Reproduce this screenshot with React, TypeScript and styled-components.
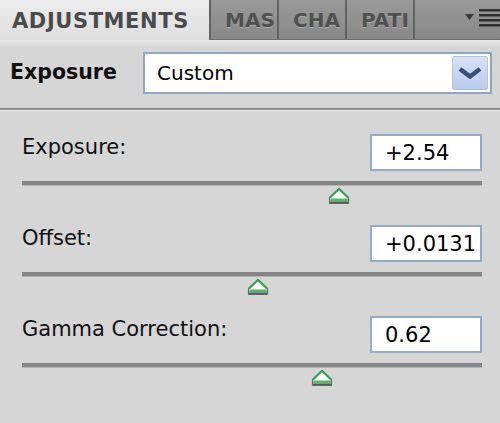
import styled, { createGlobalStyle } from 'styled-components';

type Setting = {
  label: string;
  value: string;
  thumb: number;
};

const settings: Setting[] = [
  { label: 'Exposure:', value: '+2.54', thumb: 317 },
  { label: 'Offset:', value: '+0.0131', thumb: 236 },
  { label: 'Gamma Correction:', value: '0.62', thumb: 300 },
];

// only the visible part of each narrow tab's name
const tabs = ['MAS', 'CHA', 'PATI'];

function Thumb() {
  return (
    <svg width="22" height="18" viewBox="0 0 22 18">
      <path d="M11 1.5 L20.5 10.5 V16.5 H1.5 V10.5 Z" fill="#ffffff" stroke="#6e6e6e" strokeWidth="1.2" />
      <path d="M2 10.5 L11 2 L20 10.5" fill="none" stroke="#33a24c" strokeWidth="2" strokeLinejoin="round" />
      <rect x="2.2" y="11.5" width="17.6" height="3" fill="#4dbb62" />
      <rect x="2" y="14.5" width="18" height="2" fill="#5a5a5a" />
    </svg>
  );
}

function App() {
  return (
    <>
      <GlobalStyle />
      <Panel>
        <TabBar>
          <ActiveTab>ADJUSTMENTS</ActiveTab>
          {tabs.map((t) => (
            <Tab key={t}>{t}</Tab>
          ))}
          <Tab $last />
          <MenuButton>
            <svg width="36" height="20" viewBox="0 0 36 20">
              <path d="M1 5 H10 L5.5 11 Z" fill="#3a3a3a" />
              <rect x="15" y="0" width="21" height="2.5" fill="#2e2e2e" />
              <rect x="15" y="5" width="21" height="2.5" fill="#2e2e2e" />
              <rect x="15" y="10" width="21" height="2.5" fill="#2e2e2e" />
              <rect x="15" y="15" width="21" height="2.5" fill="#2e2e2e" />
            </svg>
          </MenuButton>
        </TabBar>

        <Header>
          <PresetLabel>Exposure</PresetLabel>
          <Select>
            <SelectText>Custom</SelectText>
            <SelectButton>
              <svg width="24" height="12" viewBox="0 0 24 12">
                <path d="M2 2 L12 9.5 L22 2" fill="none" stroke="#3b4e76" strokeWidth="4.5" strokeLinejoin="miter" />
              </svg>
            </SelectButton>
          </Select>
        </Header>

        <Controls>
          {settings.map((s) => (
            <Row key={s.label}>
              <RowTop>
                <Label>{s.label}</Label>
                <ValueBox>{s.value}</ValueBox>
              </RowTop>
              <Track />
              <ThumbLane>
                <ThumbHolder style={{ left: s.thumb - 11 }}>
                  <Thumb />
                </ThumbHolder>
              </ThumbLane>
            </Row>
          ))}
        </Controls>
      </Panel>
    </>
  );
}

const GlobalStyle = createGlobalStyle`
  html, body {
    margin: 0;
    padding: 0;
    background: #d6d6d7;
  }
  body {
    font-family: "DejaVu Sans", "Liberation Sans", sans-serif;
  }
`;

const Panel = styled.div`
  width: 500px;
  height: 423px;
  background: #d6d6d7;
  display: flex;
  flex-direction: column;
  overflow: hidden;
`;

const TabBar = styled.div`
  height: 40px;
  display: flex;
  background: linear-gradient(#9a9a9a, #878787);
  border-bottom: 1px solid #6c6c6c;
  box-sizing: border-box;
`;

const ActiveTab = styled.div`
  width: 209px;
  height: 41px;
  flex-shrink: 0;
  box-sizing: border-box;
  padding-left: 12px;
  display: flex;
  align-items: center;
  background: linear-gradient(#ececec, #dedede);
  color: #4b4b4b;
  font-weight: bold;
  font-size: 21px;
  letter-spacing: 0.6px;
`;

const Tab = styled.div<{ $last?: boolean }>`
  width: ${({ $last }) => ($last ? '2px' : '68px')};
  flex-shrink: 0;
  box-sizing: border-box;
  border-left: 2px solid #626262;
  padding-left: 14px;
  display: flex;
  align-items: center;
  overflow: hidden;
  white-space: nowrap;
  color: #505050;
  font-weight: bold;
  font-size: 20px;
  text-shadow: 0 1px 0 rgba(255, 255, 255, 0.25);
`;

const MenuButton = styled.div`
  margin-left: auto;
  display: flex;
  align-items: center;
  padding-bottom: 2px;
`;

const Header = styled.div`
  height: 70px;
  flex-shrink: 0;
  box-sizing: border-box;
  display: flex;
  align-items: center;
  padding: 0 8px 2px 10px;
  background: linear-gradient(#e8e8e8 0, #d6d6d7 7px);
  border-bottom: 2px solid #8f8f8f;
  box-shadow: 0 1px 0 #ececec;
`;

const PresetLabel = styled.div`
  width: 133px;
  flex-shrink: 0;
  padding-bottom: 3px;
  font-weight: bold;
  font-size: 20.5px;
  color: #111;
`;

const Select = styled.div`
  width: 349px;
  height: 42px;
  box-sizing: border-box;
  border: 2px solid #8ea7c5;
  background: #fff;
  display: flex;
  align-items: center;
  padding: 0 2px 0 12px;
`;

const SelectText = styled.span`
  font-size: 20px;
  color: #000;
  flex: 1;
`;

const SelectButton = styled.div`
  width: 36px;
  height: 34px;
  box-sizing: border-box;
  border: 1px solid #b4c4e0;
  border-radius: 2px;
  background: linear-gradient(#d6e1f6, #b9cbed);
  display: flex;
  align-items: center;
  justify-content: center;
`;

const Controls = styled.div`
  padding: 24px 18px 0 22px;
  display: flex;
  flex-direction: column;
`;

const Row = styled.div`
  display: flex;
  flex-direction: column;
  height: 91px;
`;

const RowTop = styled.div`
  display: flex;
  align-items: flex-start;
  justify-content: space-between;
  height: 37px;
`;

const Label = styled.div`
  padding-top: 3px;
  font-size: 21px;
  line-height: 21px;
  color: #111;
`;

const ValueBox = styled.div`
  width: 112px;
  height: 37px;
  box-sizing: border-box;
  border: 2px solid #92abc7;
  background: #fff;
  padding-left: 13px;
  display: flex;
  align-items: center;
  font-size: 21px;
  color: #000;
`;

const Track = styled.div`
  margin-top: 10px;
  height: 4px;
  background: #858585;
  border-bottom: 1px solid #b5b5b5;
`;

const ThumbLane = styled.div`
  position: relative;
  height: 20px;
`;

const ThumbHolder = styled.div`
  position: absolute;
  top: 1px;
  line-height: 0;
`;

export default App;
